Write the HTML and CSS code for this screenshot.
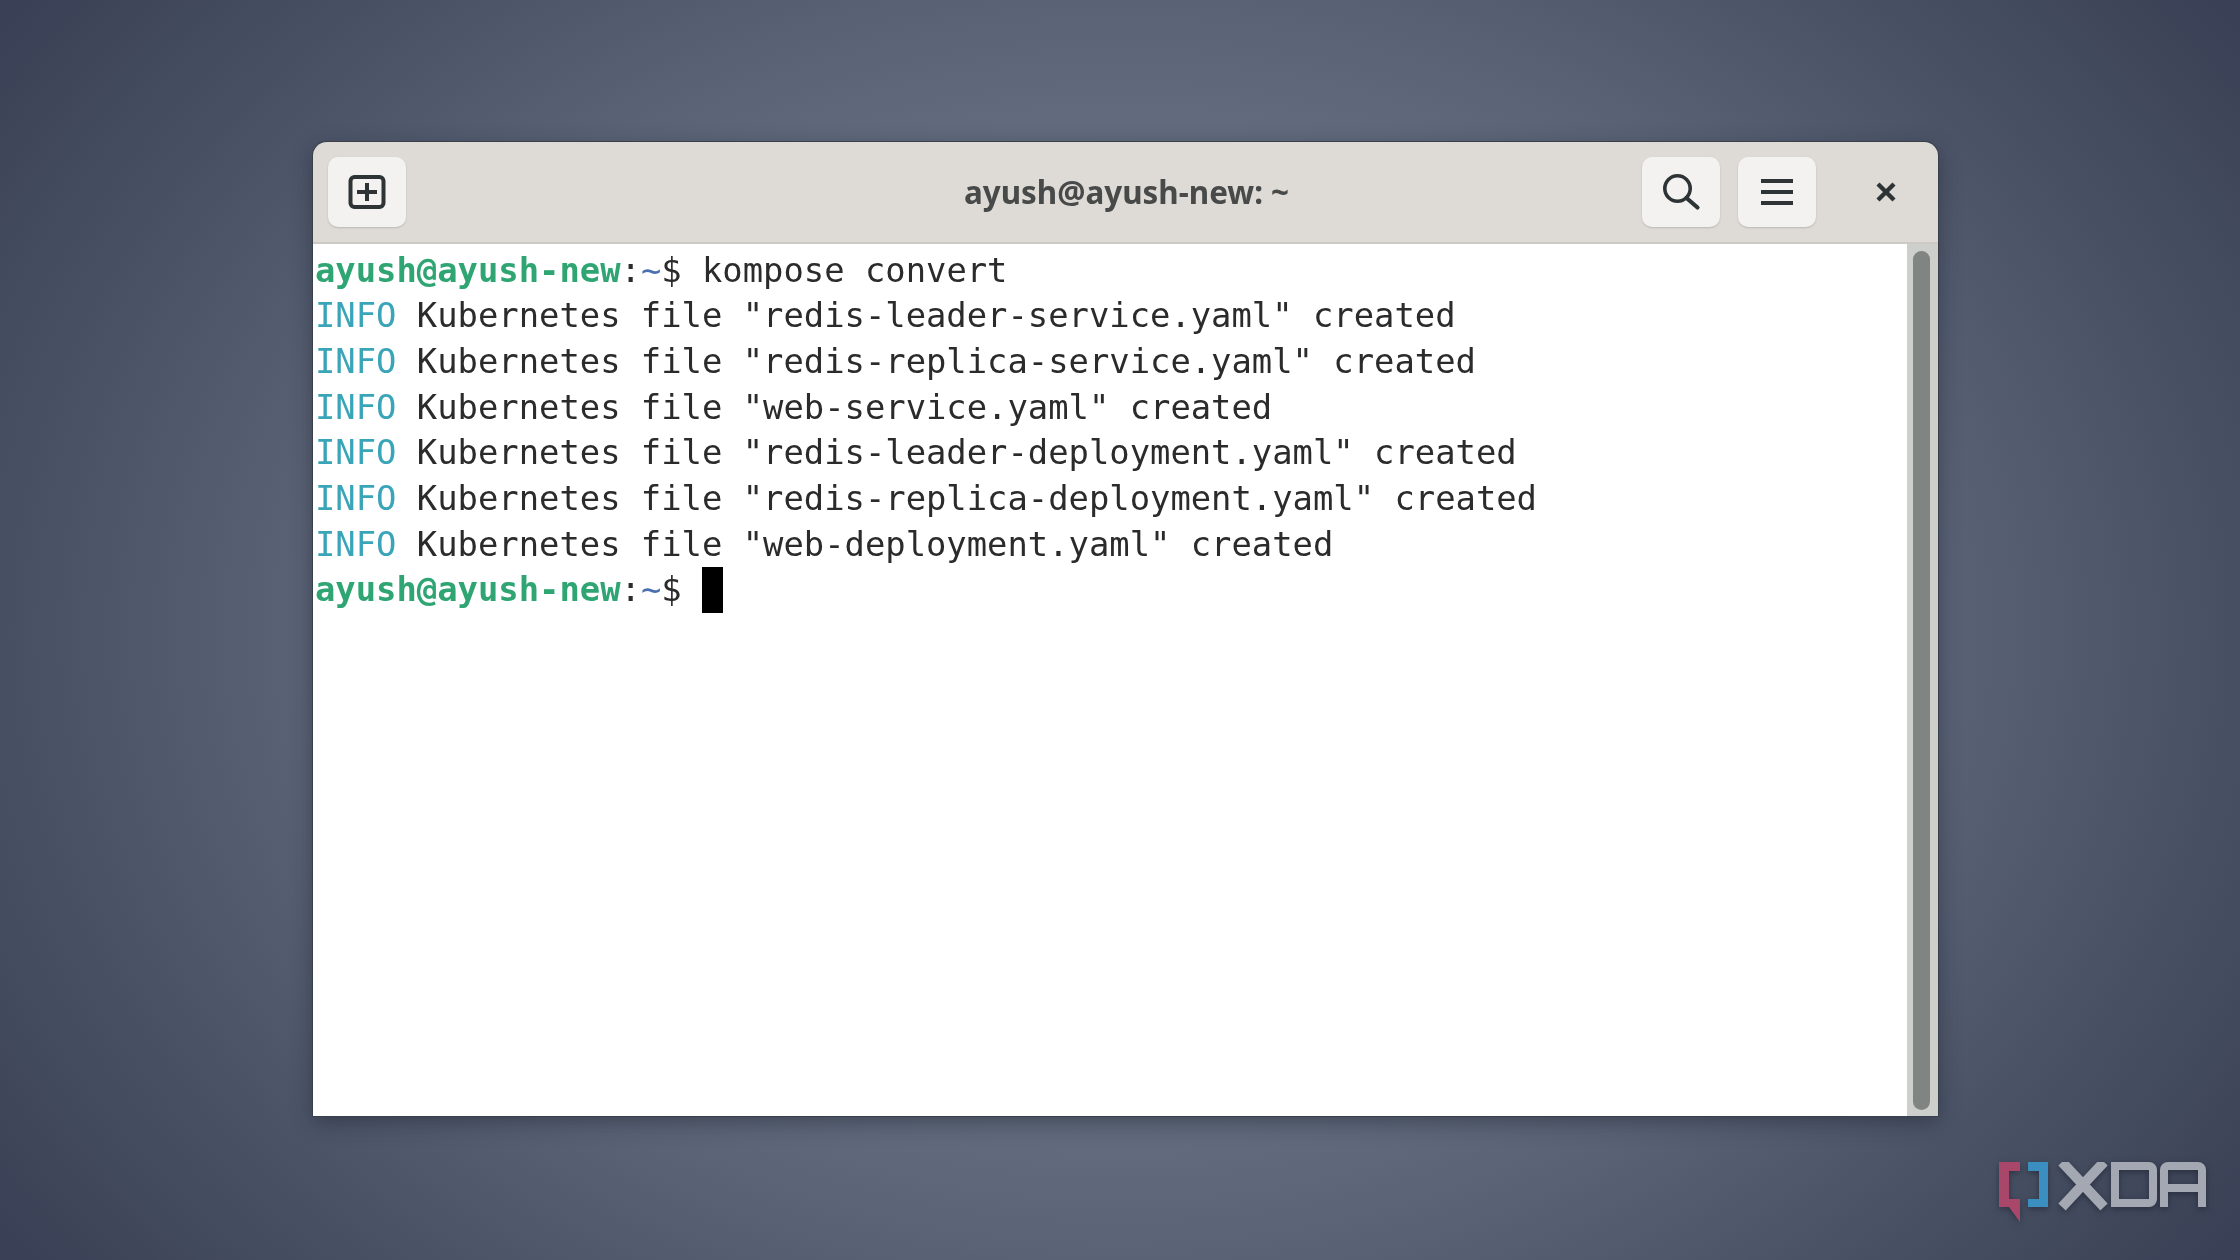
FILE: index.html
```html
<!DOCTYPE html>
<html lang="en">
<head>
<meta charset="utf-8">
<title>Terminal</title>
<link rel="stylesheet" href="styles.css">
</head>
<body>
<main class="window">
  <header class="titlebar">
    <div class="group">
      <button class="btn" aria-label="New tab">
        <svg width="40" height="40" viewBox="0 0 40 40"><rect x="3.5" y="5" width="33" height="30" rx="4" fill="none" stroke="#2e3436" stroke-width="4"/><path d="M20 11v18M10 20h20" stroke="#2e3436" stroke-width="4" fill="none"/></svg>
      </button>
    </div>
    <h1 class="title">ayush@ayush-new: ~</h1>
    <div class="group group-end">
      <button class="btn" aria-label="Search">
        <svg width="40" height="40" viewBox="0 0 40 40"><circle cx="16.5" cy="16.5" r="12.7" fill="none" stroke="#2e3436" stroke-width="3.6"/><path d="M25.5 26L36.5 35.5" stroke="#2e3436" stroke-width="4.2" stroke-linecap="round" fill="none"/></svg>
      </button>
      <button class="btn" aria-label="Menu">
        <svg width="40" height="40" viewBox="0 0 40 40"><path d="M4 9h32M4 20h32M4 31h32" stroke="#2e3436" stroke-width="4" fill="none"/></svg>
      </button>
      <button class="close" aria-label="Close">
        <svg width="24" height="24" viewBox="0 0 24 24"><path d="M4 4l16 16M20 4L4 20" stroke="#2e3436" stroke-width="4.4" fill="none"/></svg>
      </button>
    </div>
  </header>
  <section class="content">
    <pre class="term"><span class="host">ayush@ayush-new</span>:<span class="path">~</span>$ kompose convert
<span class="info">INFO</span> Kubernetes file "redis-leader-service.yaml" created
<span class="info">INFO</span> Kubernetes file "redis-replica-service.yaml" created
<span class="info">INFO</span> Kubernetes file "web-service.yaml" created
<span class="info">INFO</span> Kubernetes file "redis-leader-deployment.yaml" created
<span class="info">INFO</span> Kubernetes file "redis-replica-deployment.yaml" created
<span class="info">INFO</span> Kubernetes file "web-deployment.yaml" created
<span class="host">ayush@ayush-new</span>:<span class="path">~</span>$ <span class="cursor"> </span></pre>
    <div class="scrollbar"><div class="thumb"></div></div>
  </section>
</main>
<div class="logo">
  <svg width="208" height="62" viewBox="0 0 208 62">
    <path d="M0 0h21v9H10v28h11v23L10 45H0z" fill="#a8476a"/>
    <path d="M29 0h20v45H29v-8h11V9H29z" fill="#3a8fc0"/>
    <g fill="none" stroke="#a3a8b2" stroke-width="8">
      <path d="M63 0l42 45M105 0L63 45" stroke-width="10"/>
      <path d="M116 4h34a4 4 0 0 1 4 4v29a4 4 0 0 1-4 4h-34z"/>
      <path d="M165 45V8a4 4 0 0 1 4-4h30a4 4 0 0 1 4 4v37M165 26h38"/>
    </g>
  </svg>
</div>
</body>
</html>
```
FILE: styles.css
```css
* { box-sizing: border-box; }
html, body { margin: 0; height: 100%; }
body {
  width: 2240px;
  height: 1260px;
  overflow: hidden;
  padding: 142px 302px 144px 313px;
  background: radial-gradient(ellipse 1300px 1000px at 50% 50%, #6a7485 0%, #626c7e 50%, #5a6376 63%, #475063 86%, #3a4055 105%);
  position: relative;
}
.window {
  height: 974px;
  display: flex;
  flex-direction: column;
  border-radius: 14px 14px 0 0;
  overflow: hidden;
  box-shadow: 0 0 0 1px #3a3f4c, 0 6px 22px rgba(20, 24, 36, 0.45);
}
.titlebar {
  height: 102px;
  flex: none;
  display: grid;
  grid-template-columns: 1fr auto 1fr;
  align-items: center;
  padding: 0 13px 0 15px;
  background: #dedbd6;
  border-bottom: 2px solid #cdc9c4;
}
.group {
  display: flex;
  align-items: center;
  gap: 18px;
}
.group-end { justify-content: flex-end; }
.btn {
  width: 78px;
  height: 70px;
  flex: none;
  display: flex;
  align-items: center;
  justify-content: center;
  padding: 0;
  background: #f3f2f0;
  border: none;
  border-radius: 10px;
  box-shadow: 0 1px 2px rgba(0, 0, 0, 0.16);
}
.title {
  margin: 0;
  text-align: center;
  font: 700 31.4px/1 "Noto Sans", "Open Sans", sans-serif;
  color: #484a4a;
  filter: blur(0.5px);
}
.close {
  width: 78px;
  height: 70px;
  flex: none;
  display: flex;
  align-items: center;
  justify-content: center;
  margin-left: 13px;
  padding: 0;
  background: none;
  border: none;
}
.content {
  flex: 1;
  display: flex;
  background: #fff;
  min-height: 0;
}
.term {
  flex: 1;
  margin: 0;
  padding: 3.5px 0 0 2px;
  font: 33.85px/45.7px "DejaVu Sans Mono", monospace;
  color: #2b2b2b;
  filter: blur(0.6px);
}
.host { color: #2fa573; font-weight: 700; }
.path { color: #4a6fb0; }
.info { color: #3aa5b8; }
.cursor {
  display: inline-block;
  width: 21px;
  height: 46px;
  background: #000;
  vertical-align: top;
}
.scrollbar {
  width: 31px;
  flex: none;
  background: #cdcfcd;
  padding: 7px 8px 6px 6px;
}
.thumb {
  height: 100%;
  background: #808583;
  border-radius: 9px;
}
.logo {
  position: absolute;
  left: 1999px;
  top: 1162px;
  line-height: 0;
  filter: drop-shadow(0 2px 3px rgba(20, 24, 36, 0.5));
}
```
